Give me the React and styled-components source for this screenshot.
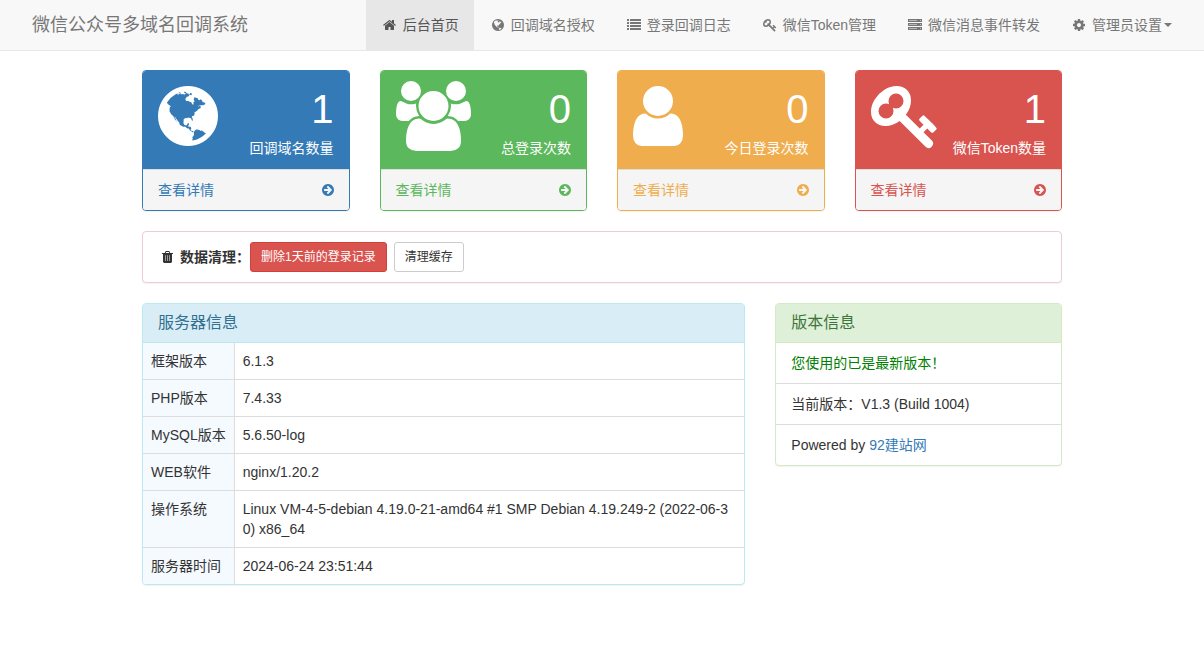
import styled, { createGlobalStyle } from "styled-components";

// [viewBox, path]
const icons = {
  home: ["64 0 1664 1792", "M1472 992v480q0 26-19 45t-45 19h-384v-384h-256v384h-384q-26 0-45-19t-19-45v-480q0-1 .5-3t.5-3l575-474 575 474q1 2 1 6zm223-69l-62 74q-8 9-21 11h-3q-13 0-21-7l-692-577-692 577q-12 8-24 7-13-2-21-11l-62-74q-8-10-7-23.5t11-21.5l719-599q32-26 76-26t76 26l244 204v-195q0-14 9-23t23-9h192q14 0 23 9t9 23v408l219 182q10 8 11 21.5t-7 23.5z"],
  globe: ["0 0 1536 1792", "M768 128q209 0 385.5 103t279.5 279.5 103 385.5-103 385.5-279.5 279.5-385.5 103-385.5-103-279.5-279.5-103-385.5 103-385.5 279.5-279.5 385.5-103zm274 521q-2 1-9.5 9.5t-13.5 9.5q2 0 4.5-5t5-11 3.5-7q6-7 22-15 14-6 52-12 34-8 51 11-2-2 9.5-13t14.5-12q3-2 15-4.5t15-7.5l2-22q-12 1-17.5-7t-6.5-21q0 2-6 8 0-7-4.5-8t-11.5 1-9 1q-10-3-15-7.5t-8-16.5-4-15q-2-5-9.5-11t-9.5-10q-1-2-2.5-5.5t-3-6.5-4-5.5-5.5-2.5-7 5-7.5 10-4.5 5q-3-2-6-1.5t-4.5 1-4.5 3-5 3.5q-3 2-8.5 3t-8.5 2q15-5-1-11-10-4-16-3 9-4 7.5-12t-8.5-14h5q-1-4-8.5-8.5t-17.5-8.5-13-6q-8-5-34-9.5t-33-.5q-5 6-4.5 10.5t4 14 3.5 12.5q1 6-5.5 13t-6.5 12q0 7 14 15.5t10 21.5q-3 8-16 16t-16 12q-5 8-1.5 18.5t10.5 16.5q2 2 1.5 4t-3.5 4.5-5.5 4-6.5 3.5l-3 2q-11 5-20.5-6t-13.5-26q-7-25-16-30-23-8-29 1-5-13-41-26-25-9-58-4 6-1 0-15-7-15-19-12 3-6 4-17.5t1-13.5q3-13 12-23 1-1 7-8.5t9.5-13.5.5-6q35 4 50-11 5-5 11.5-17t10.5-17q9-6 14-5.5t14.5 5.5 14.5 5q14 1 15.5-11t-7.5-20q12 1 3-17-4-7-8-9-12-4-27 5-8 4 2 8-1-1-9.5 10.5t-16.5 17.5-16-5q-1-1-5.5-13.5t-9.5-13.5q-8 0-16 15 3-8-11-15t-24-8q19-12-8-27-7-4-20.5-5t-19.5 4q-5 7-5.5 11.5t5 8 10.5 5.5 11.5 4 8.5 3q14 10 8 14-2 1-8.5 3.5t-11.5 4.5-6 4q-3 4 0 14t-2 14q-5-5-9-17.5t-7-16.5q7 9-25 6l-10-1q-4 0-16 2t-20.5 1-13.5-8q-4-8 0-20 1-4 4-2-4-3-11-9.5t-10-8.5q-46 15-94 41 6 1 12-1 5-2 13-6.5t10-5.5q34-14 42-7l5-5q14 16 20 25-7-4-30-1-20 6-22 12 7 12 5 18-4-3-11.5-10t-14.5-11-15-5q-16 0-22 1-146 80-235 222 7 7 12 8 4 1 5 9t2.5 11 11.5-3q9 8 3 19 1-1 44 27 19 17 21 21 3 11-10 18-1-2-9-9t-9-4q-3 5 .5 18.5t10.5 12.5q-7 0-9.5 16t-2.5 35.5-1 23.5l2 1q-3 12 5.5 34.5t21.5 19.5q-13 3 20 43 6 8 8 9 3 2 12 7.5t15 10 10 10.5q4 5 10 22.5t14 23.5q-2 6 9.5 20t10.5 23q-1 0-2.5 1t-2.5 1q3 7 15.5 14t15.5 13q1 3 2 10t3 11 8 2q2-20-24-62-15-25-17-29-3-5-5.5-15.5t-4.5-14.5q2 0 6 1.5t8.5 3.5 7.5 4 2 3q-3 7 2 17.5t12 18.5 17 19 12 13q6 6 14 19.5t0 13.5q9 0 20 10t17 20q5 8 8 26t5 24q2 7 8.5 13.5t12.5 9.5l16 8 13 7q5 2 18.5 10.5t21.5 11.5q10 4 16 4t14.5-2.5 13.5-3.5q15-2 29 15t21 21q36 19 55 11-2 1 .5 7.5t8 15.5 9 14.5 5.5 8.5q5 6 18 15t18 15q6-4 7-9-3 8 7 20t18 10q14-3 14-32-31 15-49-18 0-1-2.5-5.5t-4-8.5-2.5-8.5 0-7.5 5-3q9 0 10-3.5t-2-12.5-4-13q-1-8-11-20t-12-15q-5 9-16 8t-16-9q0 1-1.5 5.5t-1.5 6.5q-13 0-15-1 1-3 2.5-17.5t3.5-22.5q1-4 5.5-12t7.5-14.5 4-12.5-4.5-9.5-17.5-2.5q-19 1-26 20-1 3-3 10.5t-5 11.5-9 7q-7 3-24 2t-24-5q-13-8-22.5-29t-9.5-37q0-10 2.5-26.5t3-25-5.5-24.5q3-2 9-9.5t10-10.5q2-1 4.5-1.5t4.5 0 4-1.5 3-6q-1-1-4-3-3-3-4-3 7 3 28.5-1.5t27.5 1.5q15 11 22-2 0-1-2.5-9.5t-.5-13.5q5 27 29 9 3 3 15.5 5t17.5 5q3 2 7 5.5t5.5 4.5 5-.5 8.5-6.5q10 14 12 24 11 40 19 44 7 3 11 2t4.5-9.5 0-14-1.5-12.5l-1-8v-18l-1-8q-15-3-18.5-12t1.5-18.5 15-18.5q1-1 8-3.5t15.5-6.5 12.5-8q21-19 15-35 7 0 11-9-1 0-5-3t-7.5-5-4.5-2q9-5 2-16 5-3 7.5-11t7.5-10q9 12 21 2 8-8 1-16 5-7 20.5-10.5t18.5-9.5q7 2 8-2t1-12 3-12q4-5 15-9t13-5l17-11q3-4 0-4 18 2 31-11 10-11-6-20 3-6-3-9.5t-15-5.5q3-1 11.5-.5t10.5-1.5q15-10-7-16-17-5-43 12zm-163 877q206-36 351-189-3-3-12.5-4.5t-12.5-3.5q-18-7-24-8 1-7-2.5-13t-8-9-12.5-8-11-7q-2-2-7-6t-7-5.5-7.5-4.5-8.5-2-10 1l-3 1q-3 1-5.5 2.5t-5.5 3-4 3 0 2.5q-21-17-36-22-5-1-11-5.5t-10.5-7-10-1.5-11.5 7q-5 5-6 15t-2 13q-7-5 0-17.5t2-18.5q-3-6-10.5-4.5t-12 4.5-11.5 8.5-9 6.5-8.5 5.5-8.5 7.5q-3 4-6 12t-5 11q-2-4-11.5-6.5t-9.5-5.5q2 10 4 35t5 38q7 31-12 48-27 25-29 40-4 22 12 26 0 7-8 20.5t-7 21.5q0 6 2 16z"],
  list: ["0 0 1792 1792", [128, 512, 896, 1280].map((y) => `M32 ${y}h192q32 0 32 32v192q0 32-32 32h-192q-32 0-32-32v-192q0-32 32-32zm384 0h1344q32 0 32 32v192q0 32-32 32h-1344q-32 0-32-32v-192q0-32 32-32z`).join("")],
  key: ["0 0 1792 1792", "M832 512q0-80-56-136t-136-56-136 56-56 136q0 42 19 83-41-19-83-19-80 0-136 56t-56 136 56 136 136 56 136-56 56-136q0-42-19-83 41 19 83 19 80 0 136-56t56-136zm851 704q0 17-49 66t-66 49q-9 0-28.5-16t-36.5-33-38.5-40-24.5-26l-96 96 220 220q28 28 28 68 0 42-39 81t-81 39q-40 0-68-28l-671-671q-176 131-365 131-163 0-265.5-102.5t-102.5-265.5q0-160 95-313t248-248 313-95q163 0 265.5 102.5t102.5 265.5q0 189-131 365l355 355 96-96q-3-3-26-24.5t-40-38.5-33-36.5-16-28.5q0-17 49-66t66-49q13 0 23 10 6 6 46 44.5t82 79.5 86.5 86 73 78 28.5 41z"],
  server: ["0 0 1792 1792", "M128 1376h1024v-64h-1024v64zm0-512h1024v-64h-1024v64zm0-512h1024v-64h-1024v64zm1536 992q0-24-20-44t-44-20-44 20-20 44 20 44 44 20 44-20 20-44zm0-512q0-24-20-44t-44-20-44 20-20 44 20 44 44 20 44-20 20-44zm0-512q0-24-20-44t-44-20-44 20-20 44 20 44 44 20 44-20 20-44zm128 832v384h-1792v-384h1792zm0-512v384h-1792v-384h1792zm0-512v384h-1792v-384h1792z"],
  cog: ["128 0 1536 1792", "M1152 896q0-106-75-181t-181-75-181 75-75 181 75 181 181 75 181-75 75-181zm512-109v222q0 12-8 23t-20 13l-185 28q-19 54-39 91 35 50 107 138 10 12 10 25t-9 23q-27 37-99 108t-94 71q-12 0-26-9l-138-108q-44 23-91 38-16 136-29 186-7 28-36 28h-222q-14 0-24.5-8.5t-11.5-21.5l-28-184q-49-16-90-37l-141 107q-10 9-25 9-14 0-25-11-126-114-165-168-7-10-7-23 0-12 8-23 15-21 51-66.5t54-70.5q-27-50-41-99l-183-27q-13-2-21-12.5t-8-23.5v-222q0-12 8-23t19-13l186-28q14-46 39-92-40-57-107-138-10-12-10-24 0-10 9-23 26-36 98.5-107.5t94.5-71.5q13 0 26 10l138 107q44-23 91-38 16-136 29-186 7-28 36-28h222q14 0 24.5 8.5t11.5 21.5l28 184q49 16 90 37l142-107q9-9 24-9 13 0 25 10 129 119 165 170 7 8 7 22 0 12-8 23-15 21-51 66.5t-54 70.5q26 50 41 98l183 28q13 2 21 12.5t8 23.5z"],
  users: ["64 0 1920 1792", "M657 896q-162 5-265 128h-134q-82 0-138-40.5t-56-118.5q0-353 124-353 6 0 43.5 21t97.5 42.5 119 21.5q67 0 133-23-5 37-5 66 0 139 81 256zm1071 637q0 120-73 189.5t-194 69.5h-874q-121 0-194-69.5t-73-189.5q0-53 3.5-103.5t14-109 26.5-108.5 43-97.5 62-81 85.5-53.5 111.5-20q10 0 43 21.5t73 48 107 48 135 21.5 135-21.5 107-48 73-48 43-21.5q61 0 111.5 20t85.5 53.5 62 81 43 97.5 26.5 108.5 14 109 3.5 103.5zm-1024-1277q0 106-75 181t-181 75-181-75-75-181 75-181 181-75 181 75 75 181zm704 384q0 159-112.5 271.5t-271.5 112.5-271.5-112.5-112.5-271.5 112.5-271.5 271.5-112.5 271.5 112.5 112.5 271.5zm576 225q0 78-56 118.5t-138 40.5h-134q-103-123-265-128 81-117 81-256 0-29-5-66 66 23 133 23 59 0 119-21.5t97.5-42.5 43.5-21q124 0 124 353zm-128-609q0 106-75 181t-181 75-181-75-75-181 75-181 181-75 181 75 75 181z"],
  user: ["256 0 1280 1792", "M1536 1399q0 109-62.5 187t-150.5 78h-854q-88 0-150.5-78t-62.5-187q0-85 8.5-160.5t31.5-152 58.5-131 94-89 134.5-34.5q131 128 313 128t313-128q76 0 134.5 34.5t94 89 58.5 131 31.5 152 8.5 160.5zm-256-887q0 159-112.5 271.5t-271.5 112.5-271.5-112.5-112.5-271.5 112.5-271.5 271.5-112.5 271.5 112.5 112.5 271.5z"],
  arrow: ["128 0 1536 1792", "M1413 896q0-27-18-45l-91-91-362-362q-18-18-45-18t-45 18l-91 91q-18 18-18 45t18 45l189 189h-502q-26 0-45 19t-19 45v128q0 26 19 45t45 19h502l-189 189q-19 19-19 45t19 45l91 91q18 18 45 18t45-18l362-362 91-91q18-18 18-45zm251 0q0 209-103 385.5t-279.5 279.5-385.5 103-385.5-103-279.5-279.5-103-385.5 103-385.5 279.5-279.5 385.5-103 385.5 103 279.5 279.5 103 385.5z"],
  trash: ["192 0 1408 1792", "M672 1376v-704q0-32-32-32t-32 32v704q0 32 32 32t32-32zm256 0v-704q0-32-32-32t-32 32v704q0 32 32 32t32-32zm256 0v-704q0-32-32-32t-32 32v704q0 32 32 32t32-32zm-512-992h448l-48-117q-7-9-17-11h-317q-10 2-17 11zm928 32v64q0 14-9 23t-23 9h-96v948q0 83-47 143.5t-113 60.5h-832q-66 0-113-58.5t-47-141.5v-952h-96q-14 0-23-9t-9-23v-64q0-14 9-23t23-9h309l70-167q15-37 54-63t79-26h320q40 0 79 26t54 63l70 167h309q14 0 23 9t9 23z"],
};

const menus = [
  { icon: "home", text: "后台首页", active: true },
  { icon: "globe", text: "回调域名授权" },
  { icon: "list", text: "登录回调日志" },
  { icon: "key", text: "微信Token管理" },
  { icon: "server", text: "微信消息事件转发" },
  { icon: "cog", text: "管理员设置", caret: true },
];

const stats = [
  { icon: "globe", count: 1, label: "回调域名数量", color: "#337ab7" },
  { icon: "users", count: 0, label: "总登录次数", color: "#5cb85c" },
  { icon: "user", count: 0, label: "今日登录次数", color: "#f0ad4e" },
  { icon: "key", count: 1, label: "微信Token数量", color: "#d9534f" },
];

const serverInfo = [
  ["框架版本", "6.1.3"],
  ["PHP版本", "7.4.33"],
  ["MySQL版本", "5.6.50-log"],
  ["WEB软件", "nginx/1.20.2"],
  ["操作系统", "Linux VM-4-5-debian 4.19.0-21-amd64 #1 SMP Debian 4.19.249-2 (2022-06-30) x86_64"],
  ["服务器时间", "2024-06-24 23:51:44"],
];

function Icon({ name, large }) {
  const [viewBox, path] = icons[name];
  return (
    <StIcon viewBox={viewBox} $large={large} aria-hidden="true">
      <path d={path} />
    </StIcon>
  );
}

function Navbar() {
  return (
    <StNavbar>
      <StNavInner>
        <StBrand href="#">微信公众号多域名回调系统</StBrand>
        <StMenu>
          {menus.map((menu) => (
            <li key={menu.text}>
              <StMenuLink href="#" $active={menu.active}>
                <StFixedIcon>
                  <Icon name={menu.icon} />
                </StFixedIcon>
                <span>{menu.text}</span>
                {menu.caret && <StCaret />}
              </StMenuLink>
            </li>
          ))}
        </StMenu>
      </StNavInner>
    </StNavbar>
  );
}

function StatCard({ icon, count, label, color }) {
  return (
    <StCard $color={color}>
      <StCardHead $color={color}>
        <Icon name={icon} large />
        <div>
          <StCount>{count}</StCount>
          <div>{label}</div>
        </div>
      </StCardHead>
      <StCardLink href="#" $color={color}>
        <span>查看详情</span>
        <Icon name="arrow" />
      </StCardLink>
    </StCard>
  );
}

function App() {
  return (
    <>
      <GlobalStyle />
      <Navbar />
      <StMain>
        <StStats>
          {stats.map((stat) => (
            <StatCard key={stat.label} {...stat} />
          ))}
        </StStats>

        <StPanel $border="#ebccd1">
          <StCleanBox>
            <StFixedIcon>
              <Icon name="trash" />
            </StFixedIcon>
            <b>数据清理：</b>
            <StButtons>
              <StButton type="button" $danger>删除1天前的登录记录</StButton>
              <StButton type="button">清理缓存</StButton>
            </StButtons>
          </StCleanBox>
        </StPanel>

        <StColumns>
          <StPanel $border="#bce8f1" $span={8}>
            <StPanelTitle $bg="#d9edf7" $color="#31708f" $border="#bce8f1">服务器信息</StPanelTitle>
            <StTable>
              <tbody>
                {serverInfo.map(([name, value]) => (
                  <tr key={name}>
                    <th scope="row">{name}</th>
                    <td>{value}</td>
                  </tr>
                ))}
              </tbody>
            </StTable>
          </StPanel>

          <StPanel $border="#d6e9c6" $span={4}>
            <StPanelTitle $bg="#dff0d8" $color="#3c763d" $border="#d6e9c6">版本信息</StPanelTitle>
            <StList>
              <StListItem $color="green">您使用的已是最新版本！</StListItem>
              <StListItem>当前版本：V1.3 (Build 1004)</StListItem>
              <StListItem>
                Powered by <a href="#">92建站网</a>
              </StListItem>
            </StList>
          </StPanel>
        </StColumns>
      </StMain>
    </>
  );
}

export default App;

const GlobalStyle = createGlobalStyle`
  * {
    box-sizing: border-box;
  }
  body {
    margin: 0;
    background: #fff;
    color: #333;
    font-family: "Liberation Sans", "Noto Sans CJK SC", sans-serif;
    font-size: 14px;
    line-height: 20px;
  }
  a {
    color: #337ab7;
    text-decoration: none;
  }
`;

const StIcon = styled.svg`
  display: block;
  flex: none;
  height: ${({ $large }) => ($large ? "70px" : "14px")};
  fill: currentColor;
`;

const StFixedIcon = styled.span`
  display: flex;
  justify-content: center;
  width: 18px;
  margin-right: 4px;
`;

const StNavbar = styled.nav`
  background: #f8f8f8;
  border-bottom: 1px solid #e7e7e7;
`;

const StNavInner = styled.div`
  display: flex;
  justify-content: space-between;
  max-width: 1170px;
  margin: 0 auto;
`;

const StBrand = styled.a`
  padding: 15px;
  font-size: 18px;
  color: #777;
  white-space: nowrap;
`;

const StMenu = styled.ul`
  display: flex;
  margin: 0;
  padding: 0;
  list-style: none;
`;

const StMenuLink = styled.a`
  display: flex;
  align-items: center;
  padding: 15px;
  white-space: nowrap;
  color: ${({ $active }) => ($active ? "#555" : "#777")};
  background: ${({ $active }) => ($active ? "#e7e7e7" : "transparent")};
`;

const StCaret = styled.i`
  margin-left: 2px;
  border-top: 4px solid;
  border-right: 4px solid transparent;
  border-left: 4px solid transparent;
`;

const StMain = styled.main`
  max-width: 950px;
  margin: 0 auto;
  padding: 19px 15px;
`;

const StStats = styled.div`
  display: grid;
  grid-template-columns: repeat(4, 1fr);
  gap: 30px;
  margin-bottom: 20px;
`;

const StCard = styled.section`
  border: 1px solid ${({ $color }) => $color};
  border-radius: 4px;
  overflow: hidden;
  box-shadow: 0 1px 1px rgba(0, 0, 0, 0.05);
`;

const StCardHead = styled.div`
  display: flex;
  justify-content: space-between;
  padding: 10px 15px;
  border-bottom: 1px solid ${({ $color }) => $color};
  background: ${({ $color }) => $color};
  color: #fff;
  text-align: right;
  white-space: nowrap;
`;

const StCount = styled.div`
  font-size: 40px;
  line-height: 57px;
`;

const StCardLink = styled.a`
  display: flex;
  align-items: center;
  justify-content: space-between;
  padding: 10px 15px;
  border-top: 1px solid #ddd;
  background: #f5f5f5;
  color: ${({ $color }) => $color};
`;

const StPanel = styled.section`
  grid-column: span ${({ $span }) => $span || 12};
  margin-bottom: 20px;
  border: 1px solid ${({ $border }) => $border};
  border-radius: 4px;
  overflow: hidden;
  background: #fff;
  box-shadow: 0 1px 1px rgba(0, 0, 0, 0.05);
`;

const StCleanBox = styled.div`
  display: flex;
  align-items: center;
  padding: 10px 15px;
`;

const StButtons = styled.div`
  display: flex;
  gap: 7px;
`;

const StButton = styled.button`
  padding: 5px 10px;
  border: 1px solid ${({ $danger }) => ($danger ? "#d43f3a" : "#ccc")};
  border-radius: 3px;
  background: ${({ $danger }) => ($danger ? "#d9534f" : "#fff")};
  color: ${({ $danger }) => ($danger ? "#fff" : "#333")};
  font-family: inherit;
  font-size: 12px;
  line-height: 18px;
  cursor: pointer;
`;

const StColumns = styled.div`
  display: grid;
  grid-template-columns: repeat(12, 1fr);
  column-gap: 30px;
  align-items: start;
`;

const StPanelTitle = styled.h3`
  margin: 0;
  padding: 10px 15px;
  border-bottom: 1px solid ${({ $border }) => $border};
  background: ${({ $bg }) => $bg};
  color: ${({ $color }) => $color};
  font-size: 16px;
  font-weight: 400;
  line-height: 18px;
`;

const StTable = styled.table`
  width: 100%;
  border-collapse: separate;
  border-spacing: 0;
  th,
  td {
    padding: 8px;
    text-align: left;
    vertical-align: top;
    font-weight: normal;
  }
  th {
    width: 1%;
    background: #f5faff;
    white-space: nowrap;
  }
  td {
    border-left: 1px solid #ddd;
    word-break: break-all;
  }
  tr + tr th,
  tr + tr td {
    border-top: 1px solid #ddd;
  }
`;

const StList = styled.ul`
  margin: 0;
  padding: 0;
  list-style: none;
`;

const StListItem = styled.li`
  padding: 10px 15px;
  color: ${({ $color }) => $color || "inherit"};
  & + & {
    border-top: 1px solid #ddd;
  }
`;
